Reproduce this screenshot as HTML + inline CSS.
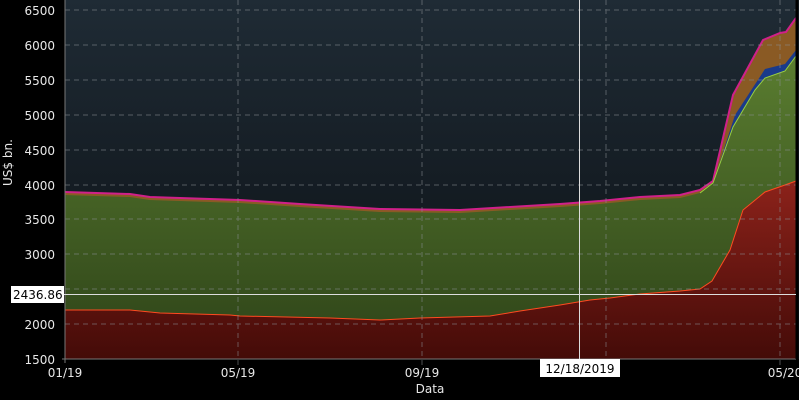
<!DOCTYPE html>
<html><head><style>
html,body{margin:0;padding:0;background:#000;width:799px;height:400px;overflow:hidden}
svg{display:block}
text{font-family:"DejaVu Sans","Liberation Sans",sans-serif;fill:#e8e8e8;font-size:12px}
</style></head><body>
<svg width="799" height="400" viewBox="0 0 799 400">
<defs>
<linearGradient id="bg" x1="0" y1="0" x2="0" y2="1"><stop offset="0" stop-color="#1f2b35"/><stop offset="1" stop-color="#0b0f13"/></linearGradient>
<linearGradient id="gr" x1="0" y1="0" x2="0" y2="1"><stop offset="0" stop-color="#5a7d30"/><stop offset="1" stop-color="#2d4218"/></linearGradient>
<linearGradient id="rd" x1="0" y1="0" x2="0" y2="1"><stop offset="0" stop-color="#8c221a"/><stop offset="1" stop-color="#440b08"/></linearGradient>
</defs>
<rect x="65" y="0" width="734" height="359" fill="url(#bg)"/>
<polygon fill="#8a5a24" points="65,192 130,194 150,197 240,200 300,204 380,209 460,210 560,204 600,201 640,197 680,195 700,190 713,181 733,95 763,40 780,33 786,32 796,18 796,359 65,359"/>
<polyline fill="none" stroke="#d0208a" stroke-width="2" points="65,192 130,194 150,197 240,200 300,204 380,209 460,210 560,204 600,201 640,197 680,195 700,190 713,181 733,95 763,40 780,33 786,32 796,18"/>
<polygon fill="#1a3a8a" points="713,183 735,115 765,69 785,64 796,50 796,359 713,359"/>
<polygon fill="url(#gr)" points="65,195 130,197 150,200 240,203 300,207 380,212 460,213 560,207 600,204 640,200 680,198 700,193 713,183 733,127 755,90 765,78 785,71 796,56 796,359 65,359"/>
<polyline fill="none" stroke="#9ad040" stroke-width="1" points="700,193 713,183 733,127 755,90 765,78 785,71 796,56"/>
<polygon fill="url(#rd)" points="65,310 130,310 160,313 230,315 240,316 330,318 380,320 420,318 490,316 520,311 560,305 590,300 610,298 640,294 680,291 700,289 712,281 730,250 743,210 765,192 785,185 796,181 796,359 65,359"/>
<polyline fill="none" stroke="#ff4a20" stroke-width="1" points="65,310 130,310 160,313 230,315 240,316 330,318 380,320 420,318 490,316 520,311 560,305 590,300 610,298 640,294 680,291 700,289 712,281 730,250 743,210 765,192 785,185 796,181"/>
<g stroke="#8a8f94" stroke-dasharray="5,4" stroke-width="1" opacity="0.55">
<line x1="65" y1="10" x2="796" y2="10"/><line x1="65" y1="45" x2="796" y2="45"/><line x1="65" y1="80" x2="796" y2="80"/><line x1="65" y1="115" x2="796" y2="115"/><line x1="65" y1="150" x2="796" y2="150"/><line x1="65" y1="185" x2="796" y2="185"/><line x1="65" y1="219" x2="796" y2="219"/><line x1="65" y1="254" x2="796" y2="254"/><line x1="65" y1="289" x2="796" y2="289"/><line x1="65" y1="324" x2="796" y2="324"/>
<line x1="238" y1="0" x2="238" y2="365"/><line x1="422" y1="0" x2="422" y2="365"/><line x1="606" y1="0" x2="606" y2="365"/><line x1="780" y1="0" x2="780" y2="365"/>
</g>
<line x1="65" y1="0" x2="65" y2="363" stroke="#777"/>
<line x1="62" y1="359" x2="796" y2="359" stroke="#777"/>
<line x1="797" y1="0" x2="797" y2="359" stroke="#000" stroke-width="3"/>
<line x1="60" y1="294.5" x2="796" y2="294.5" stroke="#ddd"/>
<line x1="579.5" y1="0" x2="579.5" y2="359" stroke="#ddd"/>
<g text-anchor="end">
<text x="55" y="15">6500</text><text x="55" y="50">6000</text><text x="55" y="85">5500</text><text x="55" y="120">5000</text><text x="55" y="155">4500</text><text x="55" y="190">4000</text><text x="55" y="224">3500</text><text x="55" y="259">3000</text><text x="55" y="329">2000</text><text x="55" y="364">1500</text>
</g>
<text x="12" y="186" transform="rotate(-90 12 186)" font-size="11">US$ bn.</text>
<rect x="11" y="286" width="53" height="17" fill="#fff"/>
<text x="13" y="299" font-size="11" style="fill:#000">2436.86</text>
<g text-anchor="middle">
<text x="65" y="377">01/19</text><text x="238" y="377">05/19</text><text x="422" y="377">09/19</text><text x="785" y="377">05/20</text>
<text x="430" y="393">Data</text>
</g>
<rect x="540" y="359" width="80" height="18" fill="#fff"/>
<text x="580" y="373" text-anchor="middle" style="fill:#000">12/18/2019</text>
</svg>
</body></html>
